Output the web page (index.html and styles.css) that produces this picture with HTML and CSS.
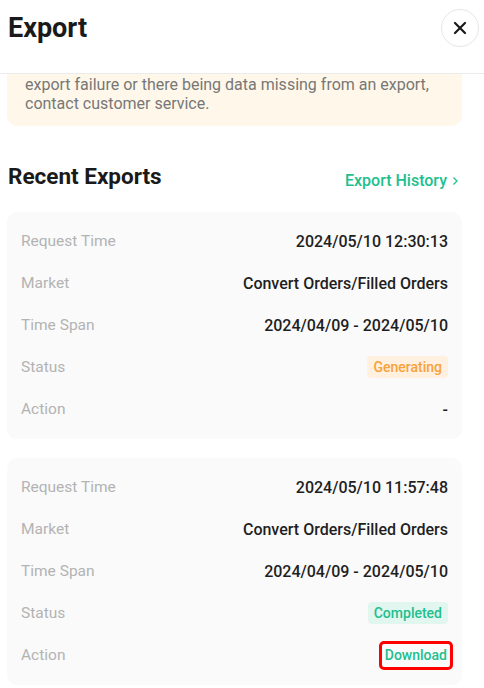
FILE: index.html
```html
<!DOCTYPE html>
<html lang="en">
<head>
  <meta charset="UTF-8" />
  <meta name="viewport" content="width=device-width, initial-scale=1" />
  <title>Export</title>
  <link rel="stylesheet" href="styles.css">
</head>
<body>

  <div class="header">
    <h1>Export</h1>
    <button class="close" aria-label="Close">
      <svg width="16" height="16" viewBox="0 0 16 16">
        <path d="M3 3L13 13M13 3L3 13" stroke="#1a1a1a" stroke-width="2.2" stroke-linecap="round" fill="none"/>
      </svg>
    </button>
  </div>

  <div class="content">
    <div class="notice">
      export failure or there being data missing from an export,<br>
      contact customer service.
    </div>

    <div class="section-head">
      <h2>Recent Exports</h2>
      <a href="#" class="history">Export History
        <svg width="10" height="10" viewBox="0 0 10 10">
          <path d="M3.5 1.5L7 5L3.5 8.5" stroke="#21bf8e" stroke-width="1.3" fill="none"/>
        </svg>
      </a>
    </div>

    <div class="card">
      <div class="row"><span class="label">Request Time</span><span class="value">2024/05/10 12:30:13</span></div>
      <div class="row"><span class="label">Market</span><span class="value">Convert Orders/Filled Orders</span></div>
      <div class="row"><span class="label">Time Span</span><span class="value">2024/04/09 - 2024/05/10</span></div>
      <div class="row"><span class="label">Status</span><span class="badge generating">Generating</span></div>
      <div class="row"><span class="label">Action</span><span class="value">-</span></div>
    </div>

    <div class="card">
      <div class="row"><span class="label">Request Time</span><span class="value">2024/05/10 11:57:48</span></div>
      <div class="row"><span class="label">Market</span><span class="value">Convert Orders/Filled Orders</span></div>
      <div class="row"><span class="label">Time Span</span><span class="value">2024/04/09 - 2024/05/10</span></div>
      <div class="row"><span class="label">Status</span><span class="badge completed">Completed</span></div>
      <div class="row"><span class="label">Action</span><a href="#" class="download">Download</a></div>
    </div>
  </div>

</body>
</html>
```

FILE: styles.css
```css
body {
  font-family: Roboto, "Noto Sans", Arial, sans-serif;
  margin: 0;
  background: #fff;
  color: #1f1f1f;
  overflow: hidden;
}
.header {
  height: 74px;
  border-bottom: 1px solid #ebebeb;
  display: flex;
  justify-content: space-between;
  align-items: flex-start;
  padding: 9px 5px 0 8px;
  box-sizing: border-box;
}
h1 {
  margin: 0;
  font-size: 27px;
  font-weight: 700;
  line-height: 38px;
  color: #1a1a1a;
}
.close {
  width: 38px;
  height: 38px;
  border-radius: 50%;
  border: 1px solid #e6e6e6;
  background: #fff;
  display: flex;
  align-items: center;
  justify-content: center;
  padding: 0;
  cursor: pointer;
}
.content {
  padding: 0 22px 0 7px;
}
.notice {
  background: #fff8ea;
  color: #777;
  font-size: 16px;
  line-height: 19px;
  padding: 1px 18px 13px;
  border-radius: 0 0 10px 10px;
}
.section-head {
  display: flex;
  justify-content: space-between;
  align-items: flex-end;
  margin-top: 36px;
  padding-left: 1px;
}
h2 {
  margin: 0;
  font-size: 22.5px;
  font-weight: 700;
  line-height: 28px;
  color: #1a1a1a;
}
.history {
  color: #21bf8e;
  text-decoration: none;
  font-size: 16px;
  font-weight: 500;
  line-height: 20px;
  display: flex;
  align-items: center;
  gap: 3px;
  margin-bottom: -1px;
  padding-right: 2px;
}
.card {
  background: #fafafa;
  border-radius: 10px;
  padding: 8px 14px 9px;
  margin-top: 22px;
}
.card + .card {
  margin-top: 19px;
}
.row {
  height: 42px;
  display: flex;
  justify-content: space-between;
  align-items: center;
  font-size: 15.5px;
}
.label {
  color: #b3b3b3;
}
.value {
  color: #1f1f1f;
  font-size: 16px;
  font-weight: 500;
}
.badge {
  font-size: 14px;
  font-weight: 500;
  line-height: 22px;
  padding: 0 6px;
  border-radius: 4px;
}
.generating {
  color: #f7a23c;
  background: #fff0e0;
}
.completed {
  color: #21bf8e;
  background: #e1f6ef;
}
.download {
  color: #21bf8e;
  text-decoration: none;
  font-size: 14px;
  font-weight: 500;
  line-height: 19px;
  padding: 2px 3px;
  border: 3px solid #f00;
  border-radius: 5px;
  margin-right: -5px;
}
```
